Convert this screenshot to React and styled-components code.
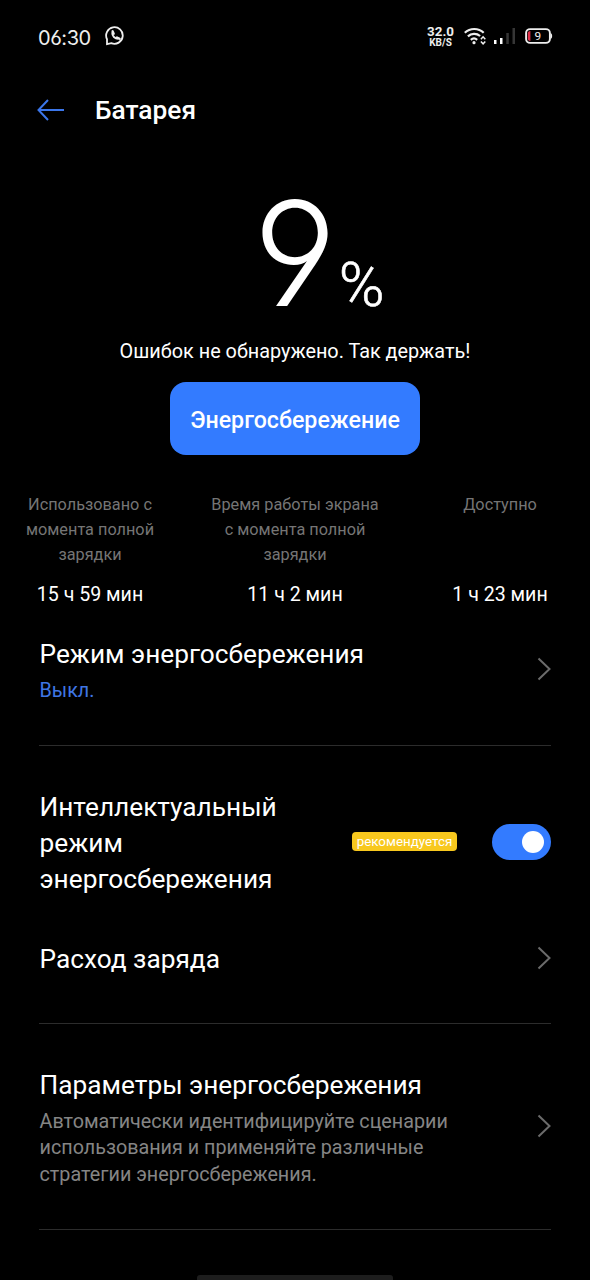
import { useState } from 'react';
import styled, { createGlobalStyle } from 'styled-components';

// ── Global ────────────────────────────────────────────────────
const GlobalStyle = createGlobalStyle`
  * {
    box-sizing: border-box;
  }
  body {
    margin: 0;
    background: #000;
    color: #fff;
    font-family: Roboto, 'Noto Sans', sans-serif;
  }
`;

const Page = styled.div`
  width: 590px;
  height: 1280px;
  display: flex;
  flex-direction: column;
  overflow: hidden;
  background: #000;
`;

// ── Status bar ────────────────────────────────────────────────
const StatusBar = styled.div`
  height: 72px;
  padding: 0 37px 0 38px;
  display: flex;
  align-items: center;
`;

const Clock = styled.span`
  width: 67px;
  padding-top: 3px;
  font-family: Inter, Roboto, sans-serif;
  font-size: 20px;
  line-height: 24px;
  letter-spacing: -0.45px;
  font-feature-settings: 'cv03', 'cv04';
  color: #eee;
`;

const StatusIcons = styled.div`
  margin-left: auto;
  display: flex;
  align-items: center;
`;

const NetSpeed = styled.div`
  margin-right: 10px;
  padding-top: 1px;
  text-align: center;
  font-weight: 700;
  font-size: 10px;
  line-height: 9px;
  color: #eee;
`;

const NetValue = styled.div`
  font-size: 13.4px;
  line-height: 12px;
`;

// ── Header ────────────────────────────────────────────────────
const Header = styled.header`
  height: 76px;
  padding-left: 37px;
  display: flex;
  align-items: center;
  gap: 31px;
`;

const Title = styled.h1`
  margin: 0;
  font-size: 26.3px;
  font-weight: 500;
  line-height: 36px;
`;

// ── Charge level ──────────────────────────────────────────────
const Hero = styled.section`
  display: flex;
  flex-direction: column;
  align-items: center;
`;

const Level = styled.div`
  height: 191px;
  padding: 32px 0 0 48px;
  display: flex;
  align-items: baseline;
  gap: 2px;
`;

const LevelValue = styled.span`
  font-family: Inter, Roboto, sans-serif;
  font-size: 145px;
  font-weight: 350;
  line-height: 148px;
  font-feature-settings: 'cv04';
`;

const LevelUnit = styled.span`
  font-size: 62px;
  font-weight: 300;
  line-height: 62px;
  -webkit-text-stroke: 0.6px #fff;
`;

const Message = styled.p`
  margin: 0;
  font-size: 19.85px;
  line-height: 26px;
`;

const SaveButton = styled.button`
  width: 250px;
  height: 73px;
  margin-top: 17px;
  padding: 2px 0 0;
  border: none;
  border-radius: 16px;
  background: #337bff;
  color: #fff;
  font-family: inherit;
  font-size: 23.2px;
  font-weight: 500;
`;

// ── Stats ─────────────────────────────────────────────────────
const Stats = styled.section`
  padding: 37px 20px 0;
  display: grid;
  grid-template-columns: 140px 174px 140px;
  justify-content: space-between;
`;

const Stat = styled.div`
  display: flex;
  flex-direction: column;
  align-items: center;
  text-align: center;
`;

const StatLabel = styled.div`
  height: 75px;
  font-size: 16.3px;
  line-height: 25px;
  color: #757575;
`;

const StatValue = styled.div`
  margin-top: 15px;
  font-size: 19.6px;
  line-height: 26px;
`;

// ── Settings ──────────────────────────────────────────────────
const Group = styled.section`
  margin: 0 39px;
  padding: ${({ $first }) => ($first ? '28px' : '43px')} 0 ${({ $bottom }) => $bottom}px;
  border-bottom: 1px solid #2c2c2c;
  display: flex;
  flex-direction: column;
  gap: 44px;
`;

const Row = styled.div`
  display: flex;
  align-items: center;
`;

const RowText = styled.div`
  width: ${({ $width }) => $width || 430}px;
  padding-left: 0.5px;
`;

const RowTitle = styled.div`
  font-size: 26.25px;
  line-height: 36px;
`;

const RowNote = styled.div`
  margin-top: 6px;
  font-size: 19.75px;
  line-height: 26.5px;
  color: ${({ $active }) => ($active ? '#3f76e4' : '#858585')};
`;

const RowEnd = styled.div`
  margin-left: auto;
  padding-bottom: 2px;
  display: flex;
  align-items: center;
  gap: 35px;
`;

const Badge = styled.span`
  width: 105px;
  height: 19px;
  border-radius: 4px;
  background: #f8c81e;
  font-size: 13.4px;
  line-height: 20px;
  text-align: center;
`;

const Toggle = styled.button`
  width: 59px;
  height: 36px;
  padding: 0 7px;
  border: none;
  border-radius: 18px;
  background: ${({ $on }) => ($on ? '#337bff' : '#3a3a3a')};
  display: flex;
  align-items: center;
  justify-content: ${({ $on }) => ($on ? 'flex-end' : 'flex-start')};
`;

const Knob = styled.span`
  width: 22px;
  height: 22px;
  border-radius: 50%;
  background: #fff;
`;

const HomeBar = styled.div`
  width: 196px;
  height: 5px;
  margin: auto auto 0;
  border-radius: 3px 3px 0 0;
  background: #1d1d1d;
`;

// ── Icons ─────────────────────────────────────────────────────
const WhatsappIcon = () => (
  <svg width="20" height="20" viewBox="0 0 20 20" fill="none" stroke="#eee">
    <path d="M2 18.200V13.200A8.300 8.300 0 1 1 6.300 17.200z" strokeWidth="1.800" />
    <path d="M7.200 6.400c-.2 3.600 2.700 6.500 6.300 6.400" strokeWidth="1.900" />
    <path d="M7.600 5.300 8.700 7.700M12 11.500l2.600 1.200" strokeWidth="2.300" strokeLinecap="round" />
  </svg>
);

const BackArrow = () => (
  <svg width="27" height="22" viewBox="0 0 27 22" fill="none" stroke="#3b76ea" strokeWidth="2">
    <path d="M11 1 1.5 11 11 21M1.5 11H27" />
  </svg>
);

const Chevron = () => (
  <svg width="14" height="24" viewBox="0 0 14 24" fill="none" stroke="#6b6b6b" strokeWidth="2">
    <path d="M1.5 1.5 12.5 12 1.5 22.5" />
  </svg>
);

const WifiIcon = () => (
  <svg width="22" height="18" viewBox="0 0 22 18" fill="none" stroke="#eee" strokeWidth="2.2">
    <path d="M.8 5.8a13.6 13.6 0 0 1 18.900 0M3.900 9.400a9.300 9.300 0 0 1 12.200-.4M6.800 12.800a5 5 0 0 1 6.400 0" />
    <circle cx="10" cy="15.700" r="1.600" fill="#eee" stroke="none" />
    <path d="m16.900 12.200 2.200-2.400 2.200 2.400M16.900 14.400l2.200 2.400 2.200-2.400" strokeWidth="1.500" />
  </svg>
);

const SignalIcon = () => (
  <svg width="22" height="18" viewBox="0 0 22 18">
    <path d="M0 13h2.500v4H0zM6 11h2.500v6H6z" fill="#fff" />
    <path d="M12.300 6h2.500v11h-2.500zM18.500 1H21v16h-2.500z" fill="#363636" />
  </svg>
);

const BatteryIcon = () => (
  <svg width="28" height="16" viewBox="0 0 28 16">
    <rect x="1.100" y="1.100" width="23.800" height="13.800" rx="4" fill="none" stroke="#eee" strokeWidth="1.900" />
    <path d="M25.500 5c2.200.6 2.200 5.400 0 6z" fill="#eee" />
    <path d="M5.400 3v10C3.600 13 2.800 12 2.800 10.800V5.200C2.800 4 3.600 3 5.400 3z" fill="#e0304a" />
    <text x="12.900" y="12.200" fill="#eee" fontSize="11.800" fontFamily="Roboto" textAnchor="middle">9</text>
  </svg>
);

const IconSlot = styled.span`
  display: flex;
  margin-right: ${({ $gap }) => $gap || 0}px;
`;

const stats = [
  { label: 'Использовано с момента полной зарядки', value: '15 ч 59 мин' },
  { label: 'Время работы экрана с момента полной зарядки', value: '11 ч 2 мин' },
  { label: 'Доступно', value: '1 ч 23 мин' },
];

// ── App ───────────────────────────────────────────────────────
function App() {
  const [smartMode, setSmartMode] = useState(true);

  return (
    <>
      <GlobalStyle />
      <Page>
        <StatusBar>
          <Clock>06:30</Clock>
          <WhatsappIcon />
          <StatusIcons>
            <NetSpeed>
              <NetValue>32.0</NetValue>
              KB/S
            </NetSpeed>
            <IconSlot $gap={8}><WifiIcon /></IconSlot>
            <IconSlot $gap={9}><SignalIcon /></IconSlot>
            <BatteryIcon />
          </StatusIcons>
        </StatusBar>

        <Header>
          <BackArrow />
          <Title>Батарея</Title>
        </Header>

        <Hero>
          <Level>
            <LevelValue>9</LevelValue>
            <LevelUnit>%</LevelUnit>
          </Level>
          <Message>Ошибок не обнаружено. Так держать!</Message>
          <SaveButton>Энергосбережение</SaveButton>
        </Hero>

        <Stats>
          {stats.map((s) => (
            <Stat key={s.label}>
              <StatLabel>{s.label}</StatLabel>
              <StatValue>{s.value}</StatValue>
            </Stat>
          ))}
        </Stats>

        <Group $first $bottom={40}>
          <Row>
            <RowText>
              <RowTitle>Режим энергосбережения</RowTitle>
              <RowNote $active>Выкл.</RowNote>
            </RowText>
            <RowEnd><Chevron /></RowEnd>
          </Row>
        </Group>

        <Group $bottom={46}>
          <Row>
            <RowText $width={260}>
              <RowTitle>Интеллектуальный режим энергосбережения</RowTitle>
            </RowText>
            <RowEnd>
              <Badge>рекомендуется</Badge>
              <Toggle $on={smartMode} onClick={() => setSmartMode(!smartMode)}>
                <Knob />
              </Toggle>
            </RowEnd>
          </Row>
          <Row>
            <RowText>
              <RowTitle>Расход заряда</RowTitle>
            </RowText>
            <RowEnd><Chevron /></RowEnd>
          </Row>
        </Group>

        <Group $bottom={41}>
          <Row>
            <RowText>
              <RowTitle>Параметры энергосбережения</RowTitle>
              <RowNote>
                Автоматически идентифицируйте сценарии использования и применяйте различные
                стратегии энергосбережения.
              </RowNote>
            </RowText>
            <RowEnd><Chevron /></RowEnd>
          </Row>
        </Group>

        <HomeBar />
      </Page>
    </>
  );
}

export default App;
